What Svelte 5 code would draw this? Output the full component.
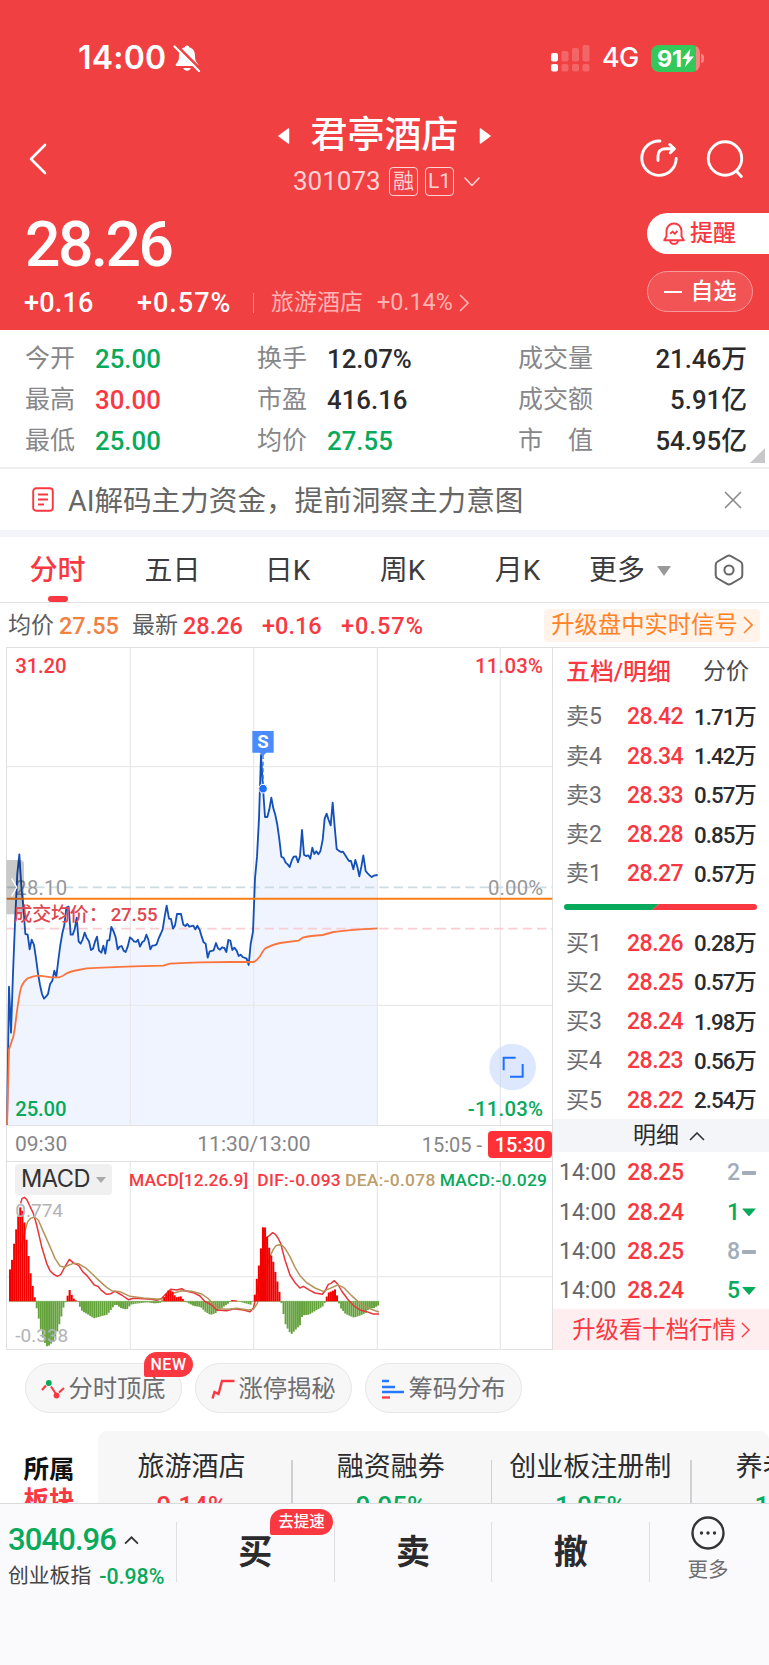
<script lang="ts">
  type Quote = { label: string; price: string; volume: string };
  type Deal = { time: string; price: string; count: number; down: boolean };

  const stats = [
    [
      { label: '今开', value: '25.00', tone: 'green' },
      { label: '最高', value: '30.00', tone: 'red' },
      { label: '最低', value: '25.00', tone: 'green' },
    ],
    [
      { label: '换手', value: '12.07%', tone: '' },
      { label: '市盈', value: '416.16', tone: '' },
      { label: '均价', value: '27.55', tone: 'green' },
    ],
    [
      { label: '成交量', value: '21.46万', tone: '' },
      { label: '成交额', value: '5.91亿', tone: '' },
      { label: '市　值', value: '54.95亿', tone: '' },
    ],
  ];

  const tabs = ['分时', '五日', '日K', '周K', '月K'];
  let activeTab = $state('分时');

  const sells: Quote[] = [
    { label: '卖5', price: '28.42', volume: '1.71万' },
    { label: '卖4', price: '28.34', volume: '1.42万' },
    { label: '卖3', price: '28.33', volume: '0.57万' },
    { label: '卖2', price: '28.28', volume: '0.85万' },
    { label: '卖1', price: '28.27', volume: '0.57万' },
  ];
  const buys: Quote[] = [
    { label: '买1', price: '28.26', volume: '0.28万' },
    { label: '买2', price: '28.25', volume: '0.57万' },
    { label: '买3', price: '28.24', volume: '1.98万' },
    { label: '买4', price: '28.23', volume: '0.56万' },
    { label: '买5', price: '28.22', volume: '2.54万' },
  ];
  const deals: Deal[] = [
    { time: '14:00', price: '28.25', count: 2, down: false },
    { time: '14:00', price: '28.24', count: 1, down: true },
    { time: '14:00', price: '28.25', count: 8, down: false },
    { time: '14:00', price: '28.24', count: 5, down: true },
  ];

  const sectors = [
    { name: '旅游酒店', change: '0.14%', tone: 'red' },
    { name: '融资融券', change: '0.95%', tone: 'green' },
    { name: '创业板注册制', change: '1.05%', tone: 'green' },
    { name: '养老概念', change: '1.12%', tone: 'green' },
  ];

  // === price chart, 3 units per pixel ===
  const priceLine =
    '21,1454 27,1040 33,1178 39,1000 45,850 52,700 58,643 64,740 70,800 76,882 83,884 89,928 95,899 102,915 108,955 114,1000 120,1035 126,1062 132,1076 138,1070 144,1062 150,1033 157,1022 163,992 169,1010 175,960 181,915 187,880 193,855 199,803 206,800 212,884 218,884 224,868 230,833 236,905 242,911 248,898 254,878 260,893 267,904 273,930 279,926 285,905 291,890 297,932 304,938 310,917 316,941 322,901 328,901 334,861 341,875 347,892 353,928 359,920 365,918 371,932 377,936 383,920 390,892 396,897 402,904 408,906 414,899 420,920 427,906 433,902 439,884 445,899 451,928 457,917 464,916 470,913 476,895 482,882 488,868 494,830 500,797 507,836 513,837 519,866 525,856 531,822 543,822 550,854 556,858 562,852 568,860 580,857 586,868 592,857 599,869 605,890 611,907 617,911 623,953 629,934 641,931 648,909 654,925 660,929 666,922 673,924 679,936 685,900 691,902 697,930 703,923 710,932 716,948 722,944 728,951 740,956 746,975 752,912 759,875 765,715 771,650 777,535 783,345 789,445 795,531 802,531 808,508 814,473 820,505 826,525 832,555 838,598 844,650 851,654 857,668 863,673 869,681 875,662 881,650 888,649 894,667 900,648 906,570 912,644 918,648 925,646 931,656 937,623 943,642 949,634 955,643 961,634 968,600 974,535 980,521 986,540 992,556 998,488 1004,560 1010,627 1016,632 1023,636 1029,635 1035,644 1041,654 1047,663 1053,663 1060,688 1066,660 1072,680 1078,709 1084,680 1090,646 1097,693 1103,700 1109,706 1115,711 1121,707 1133,705';
  const avgPath =
    'M21 1454L27 1228L40 1190Q44 1172 47 1145Q58 1055 65 1038Q73 1022 83 1015Q98 1009 113 1007Q135 1009 155 1012H177Q188 1009 195 1003Q210 994 235 990L260 985Q320 982 400 979L490 977L510 971Q560 968 600 967L690 966H760Q770 963 780 949Q790 930 796 925Q815 914 840 909L895 902L908 893Q930 887 968 885L1000 876Q1040 870 1133 865';

  // === MACD, same scale ===
  const difLine =
    '62,250 66,236 73,232 80,238 88,255 100,280 110,315 125,380 140,430 150,452 160,462 172,469 182,464 195,440 208,418 222,430 236,436 248,455 260,466 283,495 295,500 305,512 320,523 332,521 345,514 365,525 385,539 400,535 430,536 455,538 470,541 485,535 500,520 512,508 530,510 545,506 555,512 580,518 600,528 615,545 635,555 650,570 680,572 700,566 730,570 750,575 760,565 768,530 780,470 790,390 800,352 808,347 818,338 826,343 834,354 842,370 855,420 870,465 885,488 900,504 910,499 930,511 945,519 967,523 975,513 985,493 993,490 1003,482 1013,492 1025,513 1045,540 1060,556 1080,570 1100,575 1120,582 1137,582';
  const deaLine =
    '60,400 76,330 83,305 92,295 103,291 115,300 130,335 150,380 165,415 180,438 193,442 205,436 220,430 235,431 260,446 290,475 320,502 335,512 360,515 390,529 430,534 470,537 485,538 520,520 545,512 575,514 605,522 625,536 640,552 660,566 685,568 710,565 745,570 760,568 772,550 790,470 812,405 820,388 828,377 837,374 846,376 855,385 870,410 885,442 900,467 920,488 945,504 970,514 990,505 1013,495 1030,502 1055,527 1080,550 1100,563 1120,570 1137,576';
  const macdKeys = [
    [27, 92], [33, 115], [39, 163], [45, 207], [51, 243], [57, 285], [66, 270], [73, 225], [79, 170], [85, 125],
    [91, 73], [97, 40], [103, 7], [109, -25], [115, -55], [121, -85], [127, -110], [135, -130], [141, -137],
    [150, -128], [160, -120], [170, -90], [180, -55], [190, -12], [196, 0], [200, 15], [207, 34], [215, 15],
    [222, 4], [234, 0], [237, -15], [245, -30], [260, -38], [280, -51], [300, -45], [320, -40], [335, -20],
    [345, -8], [360, -20], [378, -25], [390, -10], [405, -7], [440, -3], [460, -6], [478, -5], [485, 3],
    [495, 20], [505, 35], [515, 30], [525, 12], [540, 15], [550, 3], [560, -4], [580, -14], [600, -17],
    [615, -32], [630, -41], [645, -35], [660, -22], [685, -5], [690, 4], [705, 3], [720, -2], [750, -10],
    [756, 0], [762, 18], [768, 65], [774, 103], [780, 150], [786, 222], [793, 222], [800, 190], [806, 158],
    [812, 136], [818, 118], [824, 88], [830, 60], [836, 30], [842, -3], [848, -35], [855, -70], [865, -90],
    [873, -98], [885, -85], [900, -70], [905, -42], [925, -40], [945, -28], [970, -13], [976, 10], [985, 28],
    [995, 30], [1002, 38], [1008, 22], [1014, -3], [1020, -20], [1035, -38], [1060, -49], [1080, -42],
    [1095, -35], [1105, -22], [1120, -20], [1140, -8],
  ];
  const BAR = 6.17;
  const ZERO = 544;

  function macdAt(x: number): number {
    const i = Math.max(1, macdKeys.findIndex((k) => k[0] >= x));
    const [x0, v0] = macdKeys[i - 1];
    const [x1, v1] = macdKeys[i];
    return v0 + ((v1 - v0) * (x - x0)) / (x1 - x0);
  }
  const bars = Array.from({ length: 180 }, (_, i) => {
    const x = 27 + i * BAR;
    return { x, v: macdAt(x + 1) };
  });
</script>

{#snippet chevron(cls: string)}
  <svg class="chev {cls}" viewBox="0 0 10 18"><path d="M1 1l8 8-8 8" /></svg>
{/snippet}

{#snippet book(rows: Quote[])}
  {#each rows as row}
    <div class="quote">
      <span class="side">{row.label}</span>
      <span class="red">{row.price}</span>
      <span class="vol">{row.volume}</span>
    </div>
  {/each}
{/snippet}

<div class="app">
  <header class="top">
    <div class="status">
      <span class="clock">14:00</span>
      <svg class="mute" viewBox="0 0 27 28">
        <path d="M13.5 1.5c1.400 0 2 .8 2.200 1.800 4 1 5.800 4.300 5.800 8.300 0 5 1.300 6.600 3 8.400.8.900.3 2-.8 2H3.300c-1.100 0-1.600-1.100-.8-2 1.700-1.800 3-3.400 3-8.400 0-4 1.800-7.300 5.800-8.300.2-1 .8-1.800 2.200-1.800z" fill="#fff" />
        <path d="M9.700 24h7.600c-.6 1.800-2 2.800-3.800 2.800s-3.200-1-3.800-2.800z" fill="#fff" />
        <path d="M3.200 1.500L27 25" stroke="#f04042" stroke-width="2.600" />
        <path d="M1 2.500L25.500 27" stroke="#fff" stroke-width="2.200" stroke-linecap="round" />
      </svg>
      <svg class="signal" viewBox="0 0 39 28" fill="#fff">
        <rect y="9" width="7" height="8.500" rx="2" /><rect y="20" width="7" height="7.500" rx="2" />
        <g opacity=".2">
          <rect x="10.500" y="7" width="7" height="10.500" rx="2" /><rect x="10.500" y="20" width="7" height="7.500" rx="2" />
          <rect x="21" y="4" width="7" height="13.500" rx="2" /><rect x="21" y="20" width="7" height="7.500" rx="2" />
          <rect x="31.500" y="1" width="7" height="16.500" rx="2" /><rect x="31.500" y="20" width="7" height="7.500" rx="2" />
        </g>
      </svg>
      <span class="net">4G</span>
      <span class="battery">91<svg viewBox="0 0 12 18"><path d="M8.500 0L0 10h5L3 18l9-10.500H7z" fill="#fff" /></svg></span>
      <i class="nub"></i>
    </div>

    <div class="nav">
      <svg class="back" viewBox="0 0 18 32"><path d="M16 2L2 16l14 14" /></svg>
      <div class="title">
        <div class="name">
          <svg viewBox="0 0 12 16"><path d="M10.500 1v14L1 8z" /></svg>
          <h1>君亭酒店</h1>
          <svg viewBox="0 0 12 16"><path d="M1.500 1v14L11 8z" /></svg>
        </div>
        <div class="code">
          <span>301073</span>
          <b class="mark">融</b>
          <b class="mark">L1</b>
          <svg viewBox="0 0 16 10"><path d="M1 1l7 7.500L15 1" /></svg>
        </div>
      </div>
      <svg class="share" viewBox="0 0 38 38">
        <path d="M20 2A17.200 17.200 0 1 0 36.200 19.500M18 21.500V17Q18 9.700 26 9.700H34M29.800 5.500L34.400 9.700L30.300 13.700" />
      </svg>
      <svg class="search" viewBox="0 0 38 38"><circle cx="19" cy="18.500" r="16.700" /><path d="M30.500 31.200l4.800 5.200" /></svg>
    </div>

    <div class="price-area">
      <div>
        <div class="price">28.26</div>
        <div class="change">
          <span class="c1">+0.16</span>
          <span class="c2">+0.57%</span>
          <span class="industry">旅游酒店</span>
          <span class="ind-pct">+0.14%</span>
          {@render chevron('pale')}
        </div>
      </div>
      <div class="pills">
        <button class="remind">
          <svg viewBox="0 0 22 24">
            <path d="M1.200 18.200l2.300-3.700V9a7.500 7.500 0 0 1 15 0v5.500l2.300 3.700zM7 18.500a4 3.400 0 0 0 8 0M7.200 11.800l2.400-2.200 2.200 2.200 2.600-3" />
          </svg>
          提醒
        </button>
        <button class="watch"><i></i>自选</button>
      </div>
    </div>
  </header>

  <section class="stats">
    {#each stats as col, i}
      <div class="col col{i}">
        {#each col as item}
          <div class="stat"><span class="label">{item.label}</span><span class={item.tone}>{item.value}</span></div>
        {/each}
      </div>
    {/each}
    <i class="corner"></i>
  </section>

  <section class="notice">
    <svg class="doc" viewBox="0 0 22 25">
      <rect x="1.200" y="1.200" width="19.600" height="22.600" rx="3" /><path d="M6 7.500h10M6 12.500h10M6 17.500h6" />
    </svg>
    <span>AI解码主力资金，提前洞察主力意图</span>
    <svg class="close" viewBox="0 0 18 18"><path d="M1 1l16 16M17 1L1 17" /></svg>
  </section>

  <nav class="tabs">
    {#each tabs as tab}
      <button class:active={tab === activeTab} onclick={() => (activeTab = tab)}>{tab}</button>
    {/each}
    <button class="more-tab">更多<i></i></button>
    <svg viewBox="0 0 30 32">
      <path d="M13 2.200q2-1.200 4 0l9.300 5.300q2 1.200 2 3.500v10q0 2.300-2 3.500L17 29.800q-2 1.200-4 0l-9.300-5.300q-2-1.200-2-3.500V11q0-2.300 2-3.500z" />
      <circle cx="15" cy="16" r="4.600" />
    </svg>
  </nav>

  <div class="info">
    <span>均价</span><span class="orange num">27.55</span>
    <span class="latest">最新</span><span class="red num">28.26</span>
    <span class="red pt">+0.16</span><span class="red pct">+0.57%</span>
    <button class="upgrade">升级盘中实时信号{@render chevron('orange-chev')}</button>
  </div>

  <main class="market">
    <div class="charts">
      <svg class="price-chart" viewBox="18 21 1641 1434">
        <polygon points="{priceLine} 1133,1454 21,1454" fill="#eff4ff" />
        <g class="grid">
          <path d="M391 22V1454M761 22V1454M1132 22V1454M1501 22V1454" />
          <path d="M20 380H1657M20 1096H1657" />
        </g>
        <path d="M20 742H1657" class="dash" stroke="#cddbe2" />
        <path d="M20 866H1657" class="dash" stroke="#f9cdd2" />
        <text x="46" y="764" class="grey">28.10</text>
        <text x="1630" y="764" class="grey" text-anchor="end">0.00%</text>
        <polyline points={priceLine} class="line" stroke="#1450b8" />
        <path d={avgPath} class="line" stroke="#fb743e" />
        <path d="M20 776H1657" stroke="#fa7d16" stroke-width="6" />
        <path d="M20 660h40q12 0 12 12v139q0 12-12 12H20z" fill="#000" opacity=".21" />
        <path d="M35 715l15 27-15 27" stroke="#fff" stroke-width="4" fill="none" />
        <text x="40" y="842" class="avg-label">成交均价：</text>
        <text x="332" y="842" class="avg-label num">27.55</text>
        <text x="46" y="98" fill="#f93842">31.20</text>
        <text x="1630" y="98" class="pct-label" fill="#f93842" text-anchor="end">11.03%</text>
        <text x="46" y="1428" fill="#07a95a">25.00</text>
        <text x="1630" y="1428" class="pct-label" fill="#07a95a" text-anchor="end">-11.03%</text>

        <!-- sell marker -->
        <path d="M789 345V440" stroke="#1e70ff" stroke-width="4" stroke-dasharray="12 8" />
        <path d="M757 273h64v65h-22l-10 9-10-9h-22z" fill="#4a8bff" />
        <text x="789" y="325" class="flag" text-anchor="middle">S</text>
        <circle cx="789" cy="446" r="13" fill="#1e70ff" stroke="#fff" stroke-width="3" />

        <!-- full screen button -->
        <circle cx="1538" cy="1281" r="70" fill="#dde8ff" />
        <path d="M1501 1221V1341" stroke="#d3ddef" stroke-width="3" />
        <path d="M1547 1253H1511V1291M1530 1310H1568V1272" fill="none" stroke="#1e70ff" stroke-width="6" />
      </svg>

      <div class="axis">
        <span>09:30</span>
        <span class="mid">11:30/13:00</span>
        <span class="late">15:05 -</span>
        <b>15:30</b>
      </div>

      <div class="macd">
        <svg viewBox="18 123 1641 567">
          <g class="grid"><path d="M391 123V690M761 123V690M1132 123V690M1501 123V690M20 470H1657" /></g>
          {#each bars as b}
            {#if b.v < 0}
              <rect x={b.x} y={ZERO} width="5.800" height={-b.v} fill="#64a33c" />
            {/if}
          {/each}
          <path d="M27 544H1138" stroke="#64a33c" stroke-width="2" />
          <polyline points={difLine} class="thin" stroke="#e8353a" />
          <polyline points={deaLine} class="thin" stroke="#b5935a" />
          {#each bars as b}
            {#if b.v > 0}
              <rect x={b.x} y={ZERO - b.v} width="6.200" height={b.v} fill="#f40000" />
            {/if}
          {/each}
          <text x="46" y="290" class="scale">0.774</text>
          <text x="46" y="666" class="scale">-0.338</text>
        </svg>
        <div class="legend">
          <button>MACD<i></i></button>
          <span class="red macd-name">MACD[12.26.9]</span>
          <span class="red">DIF:-0.093</span>
          <span class="tan">DEA:-0.078</span>
          <span class="green">MACD:-0.029</span>
        </div>
      </div>
    </div>

    <aside class="book">
      <div class="book-tabs"><b>五档/明细</b><span>分价</span></div>
      {@render book(sells)}
      <svg class="ratio" viewBox="0 0 193 6">
        <path d="M3 0H95l-7 6H3a3 3 0 0 1 0-6z" fill="#07a95a" />
        <path d="M95 0h95a3 3 0 0 1 0 6H88z" fill="#f93842" />
      </svg>
      {@render book(buys)}
      <div class="detail">明细<svg viewBox="0 0 16 9"><path d="M1 8l7-7 7 7" /></svg></div>
      {#each deals as d}
        <div class="deal" class:down={d.down}>
          <span>{d.time}</span><span class="red">{d.price}</span><span class="count">{d.count}</span><i></i>
        </div>
      {/each}
      <button class="ten">升级看十档行情{@render chevron('red-chev')}</button>
    </aside>
  </main>

  <section class="chips">
    <button>
      <svg viewBox="0 0 24 20">
        <path d="M1 11l4-4.500M10 7.500l5 7.500M18 13.500l5-4.500" stroke="#f93842" stroke-width="2.100" fill="none" />
        <circle cx="7.800" cy="4" r="2.900" fill="#07a95a" /><circle cx="15.500" cy="16.500" r="2.900" fill="#f93842" />
      </svg>
      分时顶底
      <em>NEW</em>
    </button>
    <button>
      <svg viewBox="0 0 24 20"><path d="M1.500 19.500L3.500 13L7.500 15L11 2H23.500" stroke="#f93842" stroke-width="2.400" fill="none" /></svg>
      涨停揭秘
    </button>
    <button>
      <svg viewBox="0 0 24 20" stroke-width="2.300">
        <path d="M1 2h7M1 8h13M1 13h22" stroke="#2878ff" /><path d="M1 18.500h8" stroke="#f93842" />
      </svg>
      筹码分布
    </button>
  </section>

  <section class="sectors">
    <h2>所属<br /><span>板块</span></h2>
    <div class="sector-list">
      {#each sectors as s}
        <div class="sector"><span>{s.name}</span><b class={s.tone}>{s.change}</b></div>
      {/each}
    </div>
  </section>

  <footer class="bottom">
    <div class="index">
      <div class="idx-val">3040.96<svg viewBox="0 0 14 8"><path d="M1 7l6-6 6 6" /></svg></div>
      <div class="idx-name">创业板指<span>-0.98%</span></div>
    </div>
    <button class="act">买<em>去提速</em></button>
    <button class="act">卖</button>
    <button class="act">撤</button>
    <button class="more">
      <svg viewBox="0 0 34 34">
        <circle cx="17" cy="17" r="15.500" fill="none" stroke="#333" stroke-width="2.400" />
        <g fill="#333"><circle cx="10.500" cy="17" r="1.700" /><circle cx="17" cy="17" r="1.700" /><circle cx="23.500" cy="17" r="1.700" /></g>
      </svg>
      更多
    </button>
  </footer>
</div>

<style>
  :global(body) { margin: 0; background: #fff; }
  .app {
    width: 769px; height: 1665px;
    display: flex; flex-direction: column;
    overflow: hidden;
    font-family: Roboto, "Noto Sans CJK SC", sans-serif;
    line-height: 1.2;
    color: #2b2b2d;
  }
  .app :is(div, span, button, b, h1, h2) { box-sizing: border-box; white-space: nowrap; }
  button { border: 0; padding: 0; margin: 0; background: none; font: inherit; color: inherit; }
  svg { flex: none; display: block; }
  .red { color: #f93842; }
  .green { color: #07a95a; }
  .orange { color: #f08142; }
  .tan { color: #bd9e6b; }
  .chev { width: 10px; height: 18px; fill: none; stroke-width: 1.6; }
  .pale { stroke: #ffb3b3; }
  .orange-chev { stroke: #ff8226; }
  .red-chev { stroke: #f93842; width: 9px; height: 16px; }

  .top { height: 330px; background: #f04042; color: #fff; flex: none; }
  .status {
    height: 115px; padding: 1px 65px 0 78px; box-sizing: border-box;
    display: flex; align-items: center;
    font-family: Inter, sans-serif;
  }
  .clock { font-size: 32px; font-weight: 600; letter-spacing: 0.2px; width: 95px; }
  .mute { width: 28px; height: 28px; }
  .signal { width: 39px; height: 28px; margin: 0 12px 0 auto; }
  .net { font-size: 27px; font-weight: 500; width: 49px; letter-spacing: -0.8px; }
  .battery {
    display: flex; align-items: center; justify-content: center; gap: 0;
    width: 49px; height: 27px; border-radius: 8px;
    background: linear-gradient(90deg, #34c759 45px, #f58482 45px);
    font-size: 23.5px; font-weight: 700; letter-spacing: -0.3px; line-height: 27px;
  }
  .battery svg { width: 12px; height: 18px; }
  .nub { width: 3px; height: 9px; margin-left: 1px; border-radius: 0 4px 4px 0; background: #f58482; }

  .nav { height: 90px; display: flex; align-items: flex-start; padding: 0 25px 0 29px; }
  .nav svg { fill: none; stroke: #fff; stroke-width: 2.9; stroke-linecap: round; stroke-linejoin: round; }
  .nav .back { width: 18px; height: 32px; margin-top: 28px; stroke-width: 2.6; }
  .title { width: 213px; margin-left: 231px; }
  .name { display: flex; align-items: center; justify-content: space-between; height: 41px; }
  .name svg { width: 12px; height: 16px; fill: #fff; stroke-width: 1.5; }
  h1 { margin: 0; font-size: 37px; font-weight: 500; line-height: 43px; }
  .code { display: flex; align-items: center; height: 51px; margin-left: 15px; color: #ffd3d3; font-size: 26px; }
  .code span { width: 96px; padding-top: 1px; }
  .mark {
    width: 29px; height: 29px; margin-right: 7px;
    border: 1.5px solid #ffd3d3; border-radius: 4px;
    font-size: 21px; font-weight: 400; line-height: 27px; text-align: center;
  }
  .code svg { width: 16px; height: 10px; margin-left: 3px; stroke: #ffd3d3; stroke-width: 1.6; }
  .share { width: 38px; height: 38px; margin: 24px 28px 0 auto; }
  .search { width: 38px; height: 38px; margin-top: 25px; }

  .price-area { height: 125px; display: flex; justify-content: space-between; }
  .price { height: 78px; padding-left: 25px; font-size: 62.5px; font-weight: 500; line-height: 79px; letter-spacing: -2.6px; }
  .change { display: flex; align-items: center; height: 40px; padding-left: 24px; font-size: 27px; font-weight: 500; }
  .c1 { width: 113px; letter-spacing: 0.2px; }
  .c2 { width: 116px; letter-spacing: 1px; }
  .industry {
    display: flex; align-items: center;
    width: 124px; height: 20px; padding-left: 17px;
    border-left: 1.5px solid #f68d8e;
    color: #ffb3b3; font-size: 23px; font-weight: 400;
  }
  .ind-pct { width: 82px; color: #ffb3b3; font-size: 23.3px; font-weight: 400; }
  .pills { display: flex; flex-direction: column; gap: 17px; width: 122px; margin-top: 8px; }
  .pills button { display: flex; align-items: center; height: 41px; padding-top: 1px; font-size: 23px; font-weight: 500; }
  .pills .remind { padding-left: 16px; gap: 5px; background: #fff; border-radius: 21px 0 0 21px; color: #f93842; }
  .remind svg { width: 22px; height: 24px; fill: none; stroke: #f93842; stroke-width: 1.9; stroke-linejoin: round; }
  .pills .watch { width: 106px; justify-content: center; gap: 9px; border: 1.5px solid #f79a9b; border-radius: 21px; background: #f25456; }
  .watch i { width: 18px; height: 2.5px; background: #fff; }

  .stats { position: relative; display: flex; height: 137px; padding: 8px 22px 0 25px; box-sizing: border-box; flex: none; font-size: 25.8px; font-weight: 500; }
  .stat { display: flex; align-items: center; height: 41px; }
  .stat span:last-child { padding-top: 1px; }
  .stat .label { font-size: 25px; font-weight: 400; color: #87878a; width: 70px; }
  .col0 { width: 232px; }
  .col1 { width: 261px; }
  .col2 { flex: 1; }
  .col2 .stat { justify-content: space-between; }
  .corner {
    position: absolute; right: 4px; bottom: 4px;
    width: 15px; height: 15px;
    background: #c8c8ca; clip-path: polygon(100% 0, 100% 100%, 0 100%);
  }

  .notice {
    display: flex; align-items: center; height: 70px; padding: 0 27px 0 32px; box-sizing: border-box; flex: none;
    border-top: 2px solid #eee; border-bottom: 7px solid #f2f4f9;
    font-size: 28.6px; color: #666;
  }
  .notice span { padding-top: 3px; }
  .doc { width: 22px; height: 25px; margin-right: 14px; fill: none; stroke: #f93842; stroke-width: 1.9; }
  .close { width: 18px; height: 18px; margin-left: auto; fill: none; stroke: #888; stroke-width: 1.6; }

  .tabs { display: flex; align-items: center; height: 66px; border-bottom: 1.5px solid #e1e1e3; box-sizing: border-box; flex: none; font-size: 28px; color: #3c3c3e; }
  .tabs button { position: relative; width: 115px; height: 65px; padding-top: 3px; text-align: center; }
  .tabs .active { color: #f93842; font-weight: 500; }
  .tabs .active::after {
    content: ''; position: absolute; left: 48px; bottom: 0;
    width: 20px; height: 6px; border-radius: 3px; background: #f93842;
  }
  .tabs .more-tab { display: flex; align-items: center; width: 126px; padding-left: 14px; gap: 12px; }
  .more-tab i { border: 7px solid transparent; border-top: 10px solid #999; border-bottom: 0; }
  .tabs svg { width: 30px; height: 32px; margin-left: 13px; fill: none; stroke: #666; stroke-width: 2; }

  .info { display: flex; align-items: center; height: 44px; padding: 0 9px 0 8px; font-size: 23px; color: #5d5d60; flex: none; }
  .info > span { padding-top: 1px; }
  .info .num, .info .pt, .info .pct { font-weight: 500; font-size: 23.5px; padding-top: 3px; }
  .info .num { width: 59px; margin-left: 5px; }
  .latest { margin-left: 14px; }
  .pt { width: 79px; margin-left: 20px; }
  .pct { letter-spacing: 1px; }
  .info .upgrade {
    display: flex; align-items: center; justify-content: center; gap: 5px;
    width: 216px; height: 33px; margin-left: auto;
    border-radius: 4px; background: #fff3ea; color: #ff8226; font-size: 23.3px; line-height: 33px;
  }

  .market { display: flex; height: 703px; flex: none; }
  .charts { width: 547px; margin-left: 6px; border: 1px solid #dfdfe2; box-sizing: border-box; }
  .price-chart { width: 547px; height: 478px; margin: -1px 0 0 -1px; }
  .price-chart text { font-size: 61px; font-weight: 500; letter-spacing: -0.5px; }
  .price-chart .pct-label { letter-spacing: 0.8px; }
  .grid { fill: none; stroke: #e9e9eb; stroke-width: 4; }
  .dash { fill: none; stroke-width: 5; stroke-dasharray: 28 15; }
  .line { fill: none; stroke-width: 5.5; stroke-linejoin: round; }
  .thin { fill: none; stroke-width: 4.5; stroke-linejoin: round; }
  .price-chart .grey { fill: #97989a; font-weight: 400; letter-spacing: 0.5px; }
  .price-chart .avg-label { fill: #de4650; font-size: 57px; }
  .price-chart .avg-label.num { font-size: 56px; }
  .price-chart .flag { fill: #fff; font-size: 56px; font-weight: 700; }
  .axis {
    display: flex; align-items: center; height: 37px; padding: 2px 0 0 8px; box-sizing: border-box;
    border: solid #dfdfe2; border-width: 1px 0;
    font-size: 21px; color: #858588;
  }
  .mid { margin-left: 130px; }
  .late { margin-left: auto; margin-right: 6px; font-size: 20px; }
  .axis b { width: 64px; height: 27px; border-radius: 4px; background: #ff3138; color: #fff; font-size: 20px; font-weight: 500; line-height: 28px; text-align: center; }
  .macd { position: relative; height: 187px; }
  .macd svg { width: 547px; height: 189px; margin: -1px 0 0 -1px; position: relative; }
  .scale { font-size: 57px; fill: #b3b3b5; }
  .legend {
    position: absolute; left: 8px; top: 3px;
    display: flex; align-items: center; height: 31px;
    font-size: 17.4px; font-weight: 500;
  }
  .legend button {
    display: flex; align-items: center; justify-content: center; gap: 6px;
    width: 97px; height: 31px; margin-right: 17px;
    border-radius: 4px; background: #f0f0f1; font-family: Inter, sans-serif; font-size: 23.6px; font-weight: 400; color: #333; letter-spacing: -0.5px;
  }
  .legend i { border: 5px solid transparent; border-top: 6px solid #aaa; border-bottom: 0; }
  .legend span { margin-right: 4px; padding-top: 2px; letter-spacing: 0.3px; }
  .legend .macd-name { margin-right: 9px; letter-spacing: 0.1px; }

  .book { width: 216px; border-top: 1px solid #dfdfe2; box-sizing: border-box; }
  .book-tabs { display: flex; align-items: center; height: 48px; padding: 0 20px 0 13px; justify-content: space-between; font-size: 23px; color: #4a4a4d; }
  .book-tabs b { color: #f93842; font-weight: 500; font-size: 23.9px; }
  .quote, .deal { display: flex; align-items: center; height: 39.25px; padding: 3px 13px 0 13px; font-size: 23px; font-weight: 500; }
  .quote .side { width: 61px; color: #6d6d70; font-weight: 400; }
  .quote .red { letter-spacing: -0.5px; }
  .quote .vol { margin-left: auto; letter-spacing: -0.9px; font-size: 22.3px; }
  .ratio { width: 193px; height: 6px; margin: 12px 0 12px 11px; }
  .detail { display: flex; align-items: center; justify-content: center; gap: 10px; height: 33.5px; padding: 2px 0 0 16px; background: #f3f5f9; font-size: 23px; }
  .detail svg { width: 16px; height: 9px; fill: none; stroke: #333; stroke-width: 1.6; }
  .deal { padding-left: 6px; color: #666; font-weight: 400; }
  .deal .red { margin-left: 11px; font-weight: 500; letter-spacing: -0.5px; }
  .count { margin-left: auto; color: #a3adb9; font-weight: 500; }
  .deal i { width: 14px; height: 4px; margin-left: 2px; border-radius: 1px; background: #a3adb9; }
  .down .count { color: #07a95a; }
  .deal.down i { height: 8px; background: #07a95a; clip-path: polygon(0 0, 100% 0, 50% 100%); }
  .ten {
    display: flex; align-items: center; justify-content: center; gap: 5px;
    width: 216px; height: 41px; padding-top: 1px; background: #ffeef0; color: #f93842; font-size: 23.4px;
  }

  .chips { display: flex; gap: 13px; padding: 13px 25px 0; flex: none; line-height: 34px; }
  .chips button {
    position: relative; display: flex; align-items: center; justify-content: center; gap: 3px;
    width: 157px; height: 50px; box-sizing: border-box;
    border: 1.5px solid #e6e6e8; border-radius: 25px; background: #f7f7f8;
    font-size: 24.3px; color: #6e6e71; padding-top: 1px;
  }
  .chips svg { width: 24px; height: 20px; fill: none; }
  em {
    position: absolute; font-style: normal; color: #fff; background: #f93842;
    border-radius: 13px 13px 13px 2px; text-align: center; white-space: nowrap;
  }
  .chips em { left: 118px; top: -12px; width: 49px; height: 25px; font-size: 16px; font-weight: 500; line-height: 26px; letter-spacing: 0.5px; }

  .sectors { display: flex; height: 72px; margin-top: 18px; overflow: hidden; flex: none; }
  h2 { width: 98px; margin: 23px 0 0; text-align: center; font-size: 25.5px; font-weight: 700; line-height: 31px; color: #111; }
  h2 span { color: #f93842; }
  .sector-list { display: flex; flex: none; width: 671px; border-radius: 9px 9px 0 0; background: #f7f7f8; overflow: hidden; }
  .sector { position: relative; display: flex; flex-direction: column; align-items: center; flex: none; width: 199.5px; padding-top: 16px; font-size: 27px; line-height: 40px; }
  .sector:first-child { width: 193px; padding-right: 6px; }
  .sector + .sector::before { content: ''; position: absolute; left: 0; top: 29px; width: 1.5px; height: 60px; background: #d0d0d2; }
  .sector b { font-size: 26px; font-weight: 500; line-height: 38px; }

  .bottom { display: flex; flex: 1; background: #fafafc; border-top: 1.5px solid #d9dade; padding-top: 18px; }
  .index { width: 176px; padding-left: 8px; }
  .idx-val { display: flex; align-items: center; gap: 8px; height: 36px; color: #07a95a; font-size: 31px; font-weight: 500; letter-spacing: -0.9px; }
  .idx-val svg { width: 15px; height: 9px; fill: none; stroke: #333; stroke-width: 1.6; }
  .idx-name { display: flex; align-items: center; gap: 8px; height: 37px; font-size: 20.8px; color: #444; }
  .idx-name span { color: #07a95a; font-size: 21.3px; font-weight: 500; }
  .act { position: relative; width: 157.7px; height: 60px; border-left: 1.5px solid #e0e0e4; font-size: 34px; font-weight: 600; text-align: center; }
  .act em { left: 93px; top: -13px; width: 63px; height: 26px; font-size: 15.5px; font-weight: 500; line-height: 27px; }
  .more { display: flex; flex-direction: column; align-items: center; gap: 5px; width: 117px; height: 60px; border-left: 1.5px solid #e0e0e4; }
  .bottom .more { font-size: 20.5px; line-height: 30px; color: #6e6e71; }
  .more svg { width: 34px; height: 34px; margin-top: -6px; }
</style>
